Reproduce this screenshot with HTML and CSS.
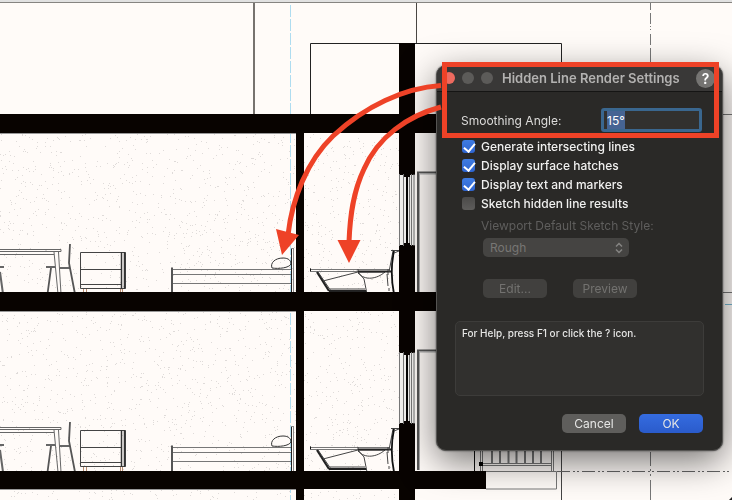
FILE: index.html
```html
<!DOCTYPE html>
<html lang="en">
<head>
<meta charset="utf-8">
<title>Hidden Line Render Settings</title>
<link rel="stylesheet" href="styles.css">
</head>
<body>
<main class="workspace">
  <svg class="drawing" viewBox="0 0 732 500" preserveAspectRatio="xMinYMin slice" aria-hidden="true">
    <defs>
      <g id="furniture" fill="none" stroke="#444" stroke-width="1">
        <!-- table and chairs -->
        <path d="M0 249.500H61V251.500H0M0 254.500H54" stroke="#666"/>
        <path d="M54 252L58 294M58.500 252L61 294" stroke="#666"/>
        <path d="M46 267H55M60 268H70M0 267H4M0 272L3 294" stroke-width="2" stroke="#666"/>
        <path d="M51 268L47.500 294M70 244L69 263L75 294" stroke-width="1.800" stroke="#555"/>
        <!-- cabinet -->
        <path d="M80.500 252.500H125.500V288.500H80.500ZM80.500 269.500H121M80.500 284.500H121" />
        <path d="M121.500 252V289M124.500 252V289" stroke="#333" stroke-width="1.500"/>
        <path d="M83.500 289V294M86.500 289V294M120.500 289V294M122.500 289V294" stroke="#b98d70"/>
        <!-- bed -->
        <path d="M172 267.500V294" stroke="#555" stroke-width="2"/>
        <path d="M173 269.500H292M173 274.500H292M173 283.500H292" stroke="#777"/>
        <path d="M272 268C270 263 275 258 283 258C289 258 291 261 291 264C289 268 279 269 272 268Z" stroke="#333"/>
        <path d="M291.500 248V294" stroke="#222"/><path d="M293.500 248V294M291 248.500H294" stroke="#888"/>
        <!-- wash basin and bath -->
        <path d="M310.500 268.500V271.500M311 269.500H390M311 271.500H388" stroke="#777"/>
        <path d="M310.500 268.500V271.500" stroke="#111"/>
        <path d="M317 272L329 291" stroke="#222" stroke-width="2.200"/>
        <path d="M318 272L331 291H365M323 281L358 272M358 272L364 279L367 294M330 289H365"/>
        <path d="M329 291H366" stroke="#222" stroke-width="2"/>
        <path d="M358 269V272M358 273C365 281 377 279 385 272H359M388 269V275"/>
        <path d="M358 271.500H392" stroke="#222" stroke-width="2"/>
        <path d="M387 274L388 286M389 288V291"/>
        <path d="M391 250.500H399M393 251L389 272"/>
        <path d="M394 251C391 265 391 279 394 294" stroke="#111" stroke-width="1.800"/>
        <path d="M394 253L399 251"/>
      </g>
      <g id="window">
        <path d="M399 175H415V245H399Z" fill="#f1f0ee"/>
        <path d="M399.500 174V246M403.500 174V246M409.500 174V246M411.500 174V246M414 174V246" stroke="#777"/>
        <path d="M407 174V246" stroke="#000" stroke-width="2"/>
        <path d="M404 174H410V177H408V180H406V177H404ZM406 240H408V243H410V246H404V243H406Z" fill="#080300"/>
        <path d="M418 292V172.500H436" fill="none" stroke="#555" stroke-width="2"/>
        <path d="M419.500 292V174H436" fill="none" stroke="#aaa"/>
      </g>
    </defs>
    <rect width="732" height="500" fill="#fffbf8"/>
    <rect width="732" height="2" fill="#e1e1e1"/>
    <path d="M0 2.500H732" stroke="#868481"/>
    <g id="stipple" fill="#000" opacity="0.16"></g>
    <path d="M254 3V114" stroke="#77736f" stroke-width="2"/>
    <path d="M416.500 3V43" stroke="#4a4643"/>
    <path d="M310.500 114V43.500H561.500V70" fill="none" stroke="#222"/>
    <path d="M290.500 5V500" stroke="#aedcf0" stroke-dasharray="12 2"/>
    <path d="M650.500 3V10M650.500 13V24M650.500 26V27M650.500 29V30M650.500 34V45M650.500 48V70M650.500 452V466M650.500 469V471M650.500 474V476M650.500 480V500" stroke="#777"/>
    <path d="M561.500 440V500" stroke="#444"/>
    <path d="M720 114.500H732M720 292.500H732" stroke="#777"/>
    <path d="M725 304.500H732" stroke="#76b6d0"/>
    <use href="#furniture"/>
    <use href="#furniture" y="178"/>
    <g fill="#080300">
      <rect y="114" width="450" height="19"/>
      <rect y="292" width="450" height="19"/>
      <rect y="471" width="486" height="18"/>
      <rect x="296" y="114" width="8" height="386"/>
      <rect x="399" y="43" width="16" height="457"/>
    </g>
    <path d="M0 133.500H296M0 311.500H296M0 489.500H296" stroke="#999"/>
    <use href="#window"/>
    <use href="#window" y="178"/>
    <g fill="none" stroke="#777">
      <path d="M474.500 440V471" stroke="#111"/>
      <path d="M480.500 440V471M482.500 440V471M551.500 440V471M553.500 440V471M483 463.500H551M480 465.500H552"/>
      <path d="M492 440V463M500 440V463M508.500 440V463M516.500 440V463M525 440V463M533 440V463M541 440V463" stroke-width="2"/>
      <path d="M486 471.500H556.500V489H486"/>
      <path d="M557 471.500H732" stroke-dasharray="13 3 2 2 2 3" stroke="#666"/>
    </g>
    <path d="M479 462H483V466H479Z" fill="#000"/>
    <path d="M732 497L729 500H732Z" fill="#222"/>
  </svg>

  <form class="dialog" role="dialog" aria-labelledby="dialog-title">
    <header class="titlebar">
      <button class="light close" type="button" aria-label="Close"></button>
      <button class="light" type="button" aria-label="Minimize"></button>
      <button class="light" type="button" aria-label="Zoom"></button>
      <h1 id="dialog-title" class="title">Hidden Line Render Settings</h1>
      <button class="help" type="button">?</button>
    </header>
    <div class="content">
      <div class="angle-row">
        <label for="angle">Smoothing Angle:</label>
        <div class="angle-field"><input id="angle" type="text" value="15°"></div>
      </div>
      <div class="options">
        <label class="option"><input type="checkbox" checked>Generate intersecting lines</label>
        <label class="option"><input type="checkbox" checked>Display surface hatches</label>
        <label class="option"><input type="checkbox" checked>Display text and markers</label>
        <label class="option"><input type="checkbox">Sketch hidden line results</label>
      </div>
      <div class="sketch">
        <label class="sketch-label" for="style">Viewport Default Sketch Style:</label>
        <div class="select-wrap">
          <select id="style" disabled><option>Rough</option></select>
          <svg class="chevrons" viewBox="0 0 8 12" aria-hidden="true"><path d="M1 4.500L4 1.500L7 4.500M1 7.500L4 10.500L7 7.500"/></svg>
        </div>
        <div class="sketch-actions">
          <button class="button" type="button" disabled>Edit...</button>
          <button class="button" type="button" disabled>Preview</button>
        </div>
      </div>
      <p class="help-text">For Help, press F1 or click the ? icon.</p>
      <footer class="actions">
        <button class="button" type="button">Cancel</button>
        <button class="button primary" type="submit">OK</button>
      </footer>
    </div>
  </form>

  <svg class="annotations" viewBox="0 0 732 500" preserveAspectRatio="xMinYMin slice" aria-hidden="true">
    <g fill="none" stroke="#ee4227" stroke-width="5">
      <rect x="444.500" y="64.500" width="272" height="71"/>
      <path d="M441 85.500C404 88 365 106 333 136C307 161 292 199 288 235"/>
      <path d="M441 107C407 116 378 137 364 169C353 192 350 216 349 242"/>
    </g>
    <path d="M282 255L276 229L299 235ZM349 263L337.500 240H360.500Z" fill="#ee4227"/>
  </svg>
</main>
<script src="stipple.js"></script>
</body>
</html>
```
FILE: styles.css
```css
* { box-sizing: border-box; }

body {
  margin: 0;
  font-family: Inter, "Liberation Sans", sans-serif;
  font-size: 12px;
  line-height: 19px;
  color: #e6e6e5;
  background: #fffbf8;
}

.workspace {
  position: relative;
  min-height: 100vh;
  overflow: hidden;
}

.drawing,
.annotations {
  position: absolute;
  inset: 0;
  width: 100%;
  height: 100%;
}

.annotations { pointer-events: none; }

.dialog {
  position: absolute;
  left: 436px;
  top: 65px;
  width: 287px;
  border: 1px solid #555452;
  border-radius: 10px;
  background: #2a2927;
  box-shadow: 0 0 2px rgba(0, 0, 0, 0.6), 0 10px 36px rgba(0, 0, 0, 0.55);
}

button,
input,
select {
  margin: 0;
  padding: 0;
  border: 0;
  font: inherit;
  color: inherit;
}

.titlebar {
  display: flex;
  align-items: center;
  gap: 7px;
  height: 26px;
  padding: 0 7px 1px 6px;
  border-bottom: 1px solid #151514;
  border-radius: 9px 9px 0 0;
  background: #393837;
}

.light {
  flex: none;
  width: 12px;
  height: 12px;
  border-radius: 50%;
  background: #5c5b59;
}

.close { background: #ee6a5f; }

.title {
  flex: 1;
  margin: 0 0 0 2px;
  font-size: 13px;
  font-weight: 600;
  white-space: nowrap;
  color: #b3b2b1;
}

.help {
  flex: none;
  width: 19px;
  height: 19px;
  border-radius: 50%;
  font-size: 14px;
  font-weight: 600;
  text-align: center;
  color: #fff;
  background: #757472;
}

.content { padding: 16px 18px 17px; }

.angle-row {
  display: flex;
  align-items: center;
  justify-content: space-between;
  padding: 0 2px 0 6px;
  color: #dcdbda;
}

.angle-field {
  width: 101px;
  height: 24px;
  padding: 3px;
  border-radius: 3px;
  background: #3a678f;
}

#angle {
  display: block;
  width: 100%;
  height: 18px;
  padding: 0 3px;
  outline: 0;
  color: #fff;
  background: #32312f;
}

#angle::selection {
  color: #fff;
  background: #466493;
}

.options { padding: 5px 0 0 7px; }

.option {
  display: flex;
  align-items: center;
  gap: 6px;
  height: 19px;
  font-weight: 500;
  color: #f0f0ef;
}

.option input {
  position: relative;
  flex: none;
  width: 13px;
  height: 13px;
  appearance: none;
  border-radius: 3px;
  background: linear-gradient(#4b4a49, #5e5d5b);
}

.option input:checked { background: linear-gradient(#3f7ce2, #2f65d0); }

.option input:checked::before {
  content: "";
  position: absolute;
  left: 4px;
  top: 1px;
  width: 5px;
  height: 9px;
  border: solid #fff;
  border-width: 0 2px 2px 0;
  transform: rotate(40deg);
}

.sketch { padding: 3px 0 0 26px; }

.sketch-label {
  display: block;
  color: #5f5e5d;
}

.select-wrap {
  position: relative;
  width: 146px;
  margin: 3px 0 0 2px;
}

.select-wrap select {
  display: block;
  width: 100%;
  height: 19px;
  padding: 0 7px;
  appearance: none;
  border-radius: 5px;
  opacity: 1;
  color: #777674;
  background: #454442;
}

.chevrons {
  position: absolute;
  right: 6px;
  top: 4px;
  width: 8px;
  height: 12px;
  fill: none;
  stroke: #858482;
  stroke-width: 1.5;
}

.sketch-actions {
  display: flex;
  gap: 26px;
  margin: 22px 0 0 2px;
}

.button {
  width: 64px;
  height: 19px;
  border-radius: 5px;
  text-align: center;
  background: #5f5e5c;
}

.button:disabled {
  color: #737270;
  background: #41403e;
}

.primary { background: linear-gradient(#356ce0, #2a5bcb); }

.help-text {
  height: 75px;
  margin: 23px 0 18px;
  padding: 2px 6px;
  border: 1px solid #3d3c3a;
  border-radius: 5px;
  font-size: 10px;
  font-weight: 500;
  background: #31302e;
}

.actions {
  display: flex;
  justify-content: flex-end;
  gap: 13px;
  padding-right: 1px;
}
```
FILE: stipple.js
```js
// Scatter plaster speckles over the section's wall surfaces.
const layer = document.getElementById("stipple");
const areas = [[0, 134, 296, 158], [304, 134, 95, 158], [0, 312, 296, 159], [304, 312, 95, 159], [0, 490, 399, 10]];
let seed = 7;
const random = () => (seed = (seed * 16807) % 2147483647) / 2147483647;
for (const [x, y, width, height] of areas) {
  let d = "";
  for (let i = 0; i < (width * height) / 50; i++) {
    d += `M${Math.floor(x + random() * width)} ${Math.floor(y + random() * height)}h1v1h-1z`;
  }
  const path = document.createElementNS("http://www.w3.org/2000/svg", "path");
  path.setAttribute("d", d);
  path.setAttribute("opacity", "0.8");
  layer.appendChild(path);
}
const angle = document.getElementById("angle");
angle.focus();
angle.select();
```
